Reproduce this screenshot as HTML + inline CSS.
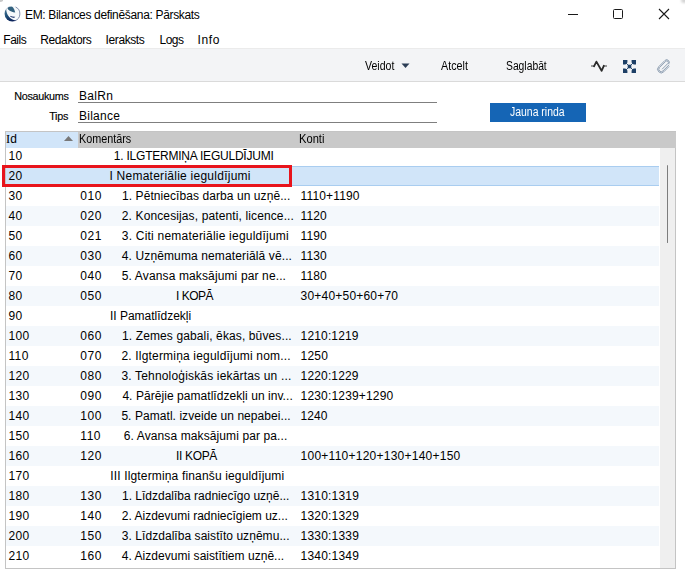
<!DOCTYPE html>
<html><head><meta charset="utf-8">
<style>
*{margin:0;padding:0;box-sizing:border-box}
html,body{width:685px;height:578px;overflow:hidden;background:#fff;font-family:"Liberation Sans",sans-serif;color:#000}
.a{position:absolute;white-space:nowrap;line-height:12px;font-size:12px}
.cx{transform-origin:0 0}
#tb{position:absolute;left:0;top:48px;width:685px;height:34px;background:#f3f4f6;border-top:1px solid #ebebeb;border-bottom:1px solid #dadada}
#grid{position:absolute;left:5px;top:131px;width:671px;height:438px;border:1px solid #c4c4c4;background:#fff}
.row{position:absolute;left:6px;width:653px;height:20px}
.alt{background:#f4f8fc}
.sel{background:#d1e5f9;border-top:1px solid #a9cdf0;border-bottom:1px solid #a9cdf0}
</style></head><body>
<!-- corners -->
<div style="position:absolute;left:-2px;top:-2px;width:5px;height:3.5px;border-radius:50%;background:#c8c8c8;filter:blur(0.6px)"></div>
<div style="position:absolute;left:681px;top:-2px;width:7px;height:5px;border-radius:50%;background:#d4d4d4;filter:blur(0.8px)"></div>
<!-- app icon -->
<svg style="position:absolute;left:4px;top:5px" width="17" height="18" viewBox="0 0 17 18">
 <defs>
  <linearGradient id="g1" x1="0" y1="0" x2="0.35" y2="1"><stop offset="0" stop-color="#4f7f98"/><stop offset="0.55" stop-color="#1f4f78"/><stop offset="1" stop-color="#0a2058"/></linearGradient>
  <clipPath id="cc"><circle cx="8.3" cy="8.8" r="7.7"/></clipPath>
 </defs>
 <circle cx="8.3" cy="8.8" r="7.7" fill="#f6f9fb"/>
 <g clip-path="url(#cc)">
  <path d="M0 3 L2.2 3.8 C2.2 6.8 3.2 9.8 5.2 12 C6.8 13.8 9 15 11.8 15.6 L12 18 L0 18 Z" fill="url(#g1)"/>
  <path d="M3.6 2.6 C4.2 1.4 7 1.2 8.6 2 C9.8 3 10.6 5 11.2 7.6 C8.6 7.4 6 6.2 4.4 4.8 C3.8 4.2 3.4 3.4 3.6 2.6 Z" fill="#33627f"/>
  <path d="M5.8 10.8 C7.5 11.5 9.5 12 11.2 11.8 C10.6 13.2 7.6 13.3 5.8 10.8 Z" fill="#0c2460"/>
 </g>
 <path d="M11.6 2 A7.5 7.5 0 0 1 11 15.8" fill="none" stroke="#34497a" stroke-width="0.8" opacity="0.75"/>
 <path d="M1.2 6 A7.6 7.6 0 0 1 5 1.8" fill="none" stroke="#8a90b0" stroke-width="0.6" opacity="0.5"/>
</svg>
<div class="a cx" style="left:25px;top:9px;letter-spacing:-0.33px">EM: Bilances definēšana: Pārskats</div>

<!-- window controls -->
<svg style="position:absolute;left:560px;top:0" width="125" height="30" viewBox="0 0 125 30">
 <rect x="8" y="14" width="10" height="1" fill="#1a1a1a"/>
 <rect x="53.5" y="9.5" width="9" height="9" rx="1" fill="none" stroke="#1a1a1a" stroke-width="1"/>
 <path d="M99 9 L109 19 M109 9 L99 19" stroke="#1a1a1a" stroke-width="1.1"/>
</svg>

<!-- menu -->
<div class="a" style="left:3.3px;top:34px;letter-spacing:-0.5px">Fails</div>
<div class="a" style="left:40.3px;top:34px;letter-spacing:-0.4px">Redaktors</div>
<div class="a" style="left:105.6px;top:34px;letter-spacing:-0.4px">Ieraksts</div>
<div class="a" style="left:159.5px;top:34px;letter-spacing:-0.5px">Logs</div>
<div class="a" style="left:197.6px;top:34px;letter-spacing:0.6px">Info</div>

<!-- toolbar -->
<div id="tb"></div>
<div class="a" style="left:364.5px;top:60px;transform:scaleX(0.88);transform-origin:0 0">Veidot</div>
<svg style="position:absolute;left:401px;top:63px" width="10" height="6"><path d="M0.5 0.5 L8.5 0.5 L4.5 5 Z" fill="#2b3d55"/></svg>
<div class="a" style="left:440.5px;top:60px;transform:scaleX(0.895);transform-origin:0 0">Atcelt</div>
<div class="a" style="left:505.5px;top:60px;transform:scaleX(0.86);transform-origin:0 0">Saglabāt</div>
<svg style="position:absolute;left:590px;top:59px" width="18" height="14" viewBox="0 0 18 14">
 <path d="M1 7 L4.2 7" stroke="#404040" stroke-width="1"/>
 <path d="M13.6 7 L17 7" stroke="#404040" stroke-width="1"/>
 <path d="M4 7.3 L6.4 2.6 L11.6 11.8 L13.8 6.8" fill="none" stroke="#2a2a2a" stroke-width="1.8" stroke-linejoin="round" stroke-linecap="round"/>
</svg>
<svg style="position:absolute;left:623px;top:60px" width="13" height="13" viewBox="0 0 13 13">
 <g fill="#1d3f66"><path d="M0 0 H4.4 V2.4 L2.4 4.4 H0 Z M13 0 V4.4 H10.6 L8.6 2.4 V0 Z M0 13 V8.6 H2.4 L4.4 10.6 V13 Z M13 13 H8.6 V10.6 L10.6 8.6 H13 Z"/>
 <rect x="4.7" y="4.7" width="3.6" height="3.6"/></g>
 <path d="M2.5 2.5 L10.5 10.5 M10.5 2.5 L2.5 10.5" stroke="#1d3f66" stroke-width="0.9"/>
</svg>
<svg style="position:absolute;left:655px;top:57.5px" width="17" height="18" viewBox="0 0 17 18">
 <g transform="translate(8.5 9) rotate(45)">
  <path d="M2.4 -5.5 V3.2 A2.4 2.4 0 0 1 -2.4 3.2 V-5.6 A1.5 1.5 0 0 1 0.6 -5.6 V2.6" fill="none" stroke="#8395aa" stroke-width="0.85"/>
  <path d="M-3.6 -5.6 V3.2 A3.6 3.6 0 0 0 3.6 3.2 V-4.5" fill="none" stroke="#8395aa" stroke-width="0.85"/>
  <path d="M-3.6 -5.6 A2.55 2.55 0 0 1 1.5 -5.6" fill="none" stroke="#8395aa" stroke-width="0.85"/>
 </g>
</svg>
<!-- form -->
<div class="a" style="left:14.2px;top:89.6px;font-size:10.8px;letter-spacing:-0.3px;-webkit-text-stroke:0.15px #000">Nosaukums</div>
<div class="a" style="left:79px;top:90px;letter-spacing:0.3px">BalRn</div>
<div style="position:absolute;left:78px;top:102px;width:359px;height:1px;background:#7f7f7f"></div>
<div class="a" style="left:49.2px;top:109.6px;font-size:10.8px;letter-spacing:-0.3px;-webkit-text-stroke:0.15px #000">Tips</div>
<div class="a" style="left:79px;top:110px;letter-spacing:0.25px">Bilance</div>
<div style="position:absolute;left:78px;top:122px;width:359px;height:1px;background:#7f7f7f"></div>
<div style="position:absolute;left:490px;top:103px;width:96px;height:19px;background:#1565b5"></div>
<div class="a" style="left:509.5px;top:106px;color:#fff;transform:scaleX(0.87);transform-origin:0 0">Jauna rinda</div>

<!-- grid -->
<div id="grid"></div>
<div style="position:absolute;left:6px;top:132px;width:670px;height:16px;background:#c9c9c9"></div>
<div style="position:absolute;left:6px;top:132px;width:72px;height:16px;background:#d1e5f9"></div>
<div class="a" style="left:6px;top:133px"><span style="font-family:'Liberation Serif',serif;font-size:12.5px">I</span><span style="letter-spacing:-0.2px">d</span></div>
<svg style="position:absolute;left:63px;top:135px" width="11" height="7"><path d="M1 6 L5.5 1 L10 6 Z" fill="#787878"/></svg>
<div class="a" style="left:78.5px;top:133px;transform:scaleX(0.9);transform-origin:0 0">Komentārs</div>
<div class="a" style="left:299px;top:133px;transform:scaleX(0.93);transform-origin:0 0">Konti</div>

<!-- ROWS -->
<div class="a" style="left:8.4px;top:150px;letter-spacing:0.4px">10</div>
<div class="a" style="left:113.80px;top:150px;letter-spacing:-0.225px">1. ILGTERMIŅA IEGULDĪJUMI</div>
<div class="row sel" style="top:166px"></div>
<div class="a" style="left:8.4px;top:170px;letter-spacing:0.4px">20</div>
<div class="a" style="left:109.40px;top:170px;letter-spacing:0.256px">I Nemateriālie ieguldījumi</div>
<div class="row" style="top:186px"></div>
<div class="a" style="left:8.4px;top:190px;letter-spacing:0.4px">30</div>
<div class="a" style="left:80.3px;top:190px;letter-spacing:0.55px">010</div>
<div class="a" style="left:122.00px;top:190px;letter-spacing:0.073px">1. Pētniecības darba un uzņē...</div>
<div class="a" style="left:300.60px;top:190px;letter-spacing:0.150px">1110+1190</div>
<div class="row alt" style="top:206px"></div>
<div class="a" style="left:8.4px;top:210px;letter-spacing:0.4px">40</div>
<div class="a" style="left:80.3px;top:210px;letter-spacing:0.55px">020</div>
<div class="a" style="left:121.80px;top:210px;letter-spacing:0.121px">2. Koncesijas, patenti, licence...</div>
<div class="a" style="left:300.60px;top:210px;letter-spacing:0.067px">1120</div>
<div class="row" style="top:226px"></div>
<div class="a" style="left:8.4px;top:230px;letter-spacing:0.4px">50</div>
<div class="a" style="left:80.3px;top:230px;letter-spacing:0.55px">021</div>
<div class="a" style="left:121.80px;top:230px;letter-spacing:0.219px">3. Citi nemateriālie ieguldījumi</div>
<div class="a" style="left:300.60px;top:230px;letter-spacing:0.067px">1190</div>
<div class="row alt" style="top:246px"></div>
<div class="a" style="left:8.4px;top:250px;letter-spacing:0.4px">60</div>
<div class="a" style="left:80.3px;top:250px;letter-spacing:0.55px">030</div>
<div class="a" style="left:121.80px;top:250px;letter-spacing:0.121px">4. Uzņēmuma nemateriālā vē...</div>
<div class="a" style="left:300.60px;top:250px;letter-spacing:0.067px">1130</div>
<div class="row" style="top:266px"></div>
<div class="a" style="left:8.4px;top:270px;letter-spacing:0.4px">70</div>
<div class="a" style="left:80.3px;top:270px;letter-spacing:0.55px">040</div>
<div class="a" style="left:121.80px;top:270px;letter-spacing:0.129px">5. Avansa maksājumi par ne...</div>
<div class="a" style="left:300.60px;top:270px;letter-spacing:0.067px">1180</div>
<div class="row alt" style="top:286px"></div>
<div class="a" style="left:8.4px;top:290px;letter-spacing:0.4px">80</div>
<div class="a" style="left:80.3px;top:290px;letter-spacing:0.55px">050</div>
<div class="a" style="left:176.00px;top:290px;letter-spacing:-0.480px">I KOPĀ</div>
<div class="a" style="left:300.60px;top:290px;letter-spacing:0.200px">30+40+50+60+70</div>
<div class="row" style="top:306px"></div>
<div class="a" style="left:8.4px;top:310px;letter-spacing:0.4px">90</div>
<div class="a" style="left:110.00px;top:310px;letter-spacing:-0.013px">II Pamatlīdzekļi</div>
<div class="row alt" style="top:326px"></div>
<div class="a" style="left:8.4px;top:330px;letter-spacing:0.4px">100</div>
<div class="a" style="left:80.3px;top:330px;letter-spacing:0.55px">060</div>
<div class="a" style="left:122.00px;top:330px;letter-spacing:0.120px">1. Zemes gabali, ēkas, būves...</div>
<div class="a" style="left:300.60px;top:330px;letter-spacing:0.150px">1210:1219</div>
<div class="row" style="top:346px"></div>
<div class="a" style="left:8.4px;top:350px;letter-spacing:0.4px">110</div>
<div class="a" style="left:80.3px;top:350px;letter-spacing:0.55px">070</div>
<div class="a" style="left:121.40px;top:350px;letter-spacing:0.187px">2. Ilgtermiņa ieguldījumi nom...</div>
<div class="a" style="left:300.60px;top:350px;letter-spacing:0.200px">1250</div>
<div class="row alt" style="top:366px"></div>
<div class="a" style="left:8.4px;top:370px;letter-spacing:0.4px">120</div>
<div class="a" style="left:80.3px;top:370px;letter-spacing:0.55px">080</div>
<div class="a" style="left:121.40px;top:370px;letter-spacing:0.174px">3. Tehnoloģiskās iekārtas un ...</div>
<div class="a" style="left:300.60px;top:370px;letter-spacing:0.150px">1220:1229</div>
<div class="row" style="top:386px"></div>
<div class="a" style="left:8.4px;top:390px;letter-spacing:0.4px">130</div>
<div class="a" style="left:80.3px;top:390px;letter-spacing:0.55px">090</div>
<div class="a" style="left:122.40px;top:390px;letter-spacing:0.055px">4. Pārējie pamatlīdzekļi un inv...</div>
<div class="a" style="left:300.60px;top:390px;letter-spacing:0.169px">1230:1239+1290</div>
<div class="row alt" style="top:406px"></div>
<div class="a" style="left:8.4px;top:410px;letter-spacing:0.4px">140</div>
<div class="a" style="left:80.3px;top:410px;letter-spacing:0.55px">100</div>
<div class="a" style="left:121.40px;top:410px;letter-spacing:0.058px">5. Pamatl. izveide un nepabei...</div>
<div class="a" style="left:300.60px;top:410px;letter-spacing:0.067px">1240</div>
<div class="row" style="top:426px"></div>
<div class="a" style="left:8.4px;top:430px;letter-spacing:0.4px">150</div>
<div class="a" style="left:80.3px;top:430px;letter-spacing:0.55px">110</div>
<div class="a" style="left:123.80px;top:430px;letter-spacing:0.107px">6. Avansa maksājumi par pa...</div>
<div class="row alt" style="top:446px"></div>
<div class="a" style="left:8.4px;top:450px;letter-spacing:0.4px">160</div>
<div class="a" style="left:80.3px;top:450px;letter-spacing:0.55px">120</div>
<div class="a" style="left:176.00px;top:450px;letter-spacing:-0.333px">II KOPĀ</div>
<div class="a" style="left:300.60px;top:450px;letter-spacing:0.245px">100+110+120+130+140+150</div>
<div class="row" style="top:466px"></div>
<div class="a" style="left:8.4px;top:470px;letter-spacing:0.4px">170</div>
<div class="a" style="left:110.20px;top:470px;letter-spacing:0.158px">III Ilgtermiņa finanšu ieguldījumi</div>
<div class="row alt" style="top:486px"></div>
<div class="a" style="left:8.4px;top:490px;letter-spacing:0.4px">180</div>
<div class="a" style="left:80.3px;top:490px;letter-spacing:0.55px">130</div>
<div class="a" style="left:122.00px;top:490px;letter-spacing:0.000px">1. Līdzdalība radniecīgo uzņē...</div>
<div class="a" style="left:300.60px;top:490px;letter-spacing:0.200px">1310:1319</div>
<div class="row" style="top:506px"></div>
<div class="a" style="left:8.4px;top:510px;letter-spacing:0.4px">190</div>
<div class="a" style="left:80.3px;top:510px;letter-spacing:0.55px">140</div>
<div class="a" style="left:121.80px;top:510px;letter-spacing:-0.000px">2. Aizdevumi radniecīgiem uz...</div>
<div class="a" style="left:300.60px;top:510px;letter-spacing:0.200px">1320:1329</div>
<div class="row alt" style="top:526px"></div>
<div class="a" style="left:8.4px;top:530px;letter-spacing:0.4px">200</div>
<div class="a" style="left:80.3px;top:530px;letter-spacing:0.55px">150</div>
<div class="a" style="left:121.80px;top:530px;letter-spacing:0.052px">3. Līdzdalība saistīto uzņēmu...</div>
<div class="a" style="left:300.60px;top:530px;letter-spacing:0.200px">1330:1339</div>
<div class="row" style="top:546px"></div>
<div class="a" style="left:8.4px;top:550px;letter-spacing:0.4px">210</div>
<div class="a" style="left:80.3px;top:550px;letter-spacing:0.55px">160</div>
<div class="a" style="left:121.80px;top:550px;letter-spacing:0.033px">4. Aizdevumi saistītiem uzņē...</div>
<div class="a" style="left:300.60px;top:550px;letter-spacing:0.200px">1340:1349</div>
<!-- /ROWS -->
<!-- scrollbar -->
<div style="position:absolute;left:660px;top:148px;width:15px;height:420px;background:#efefef"></div>
<div style="position:absolute;left:666.8px;top:165px;width:1.3px;height:78px;border-radius:1px;background:#7d7d7d"></div>

<!-- red annotation -->
<div style="position:absolute;left:2px;top:165px;width:290px;height:22px;border:3px solid #e8141c"></div>
</body></html>
